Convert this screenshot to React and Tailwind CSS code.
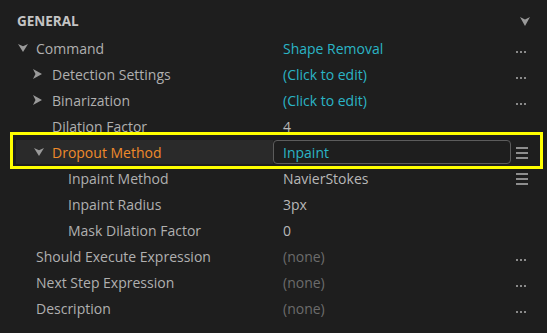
import React from "react";

const rows = [
  { label: "Command", depth: 0, arrow: "down", value: "Shape Removal", tone: "cyan", action: "dots" },
  { label: "Detection Settings", depth: 1, arrow: "right", value: "(Click to edit)", tone: "cyan", action: "dots" },
  { label: "Binarization", depth: 1, arrow: "right", value: "(Click to edit)", tone: "cyan", action: "dots" },
  { label: "Dilation Factor", depth: 1, value: "4", tone: "plain" },
  { label: "Dropout Method", depth: 1, arrow: "down", value: "Inpaint", tone: "cyan", action: "menu", selected: true },
  { label: "Inpaint Method", depth: 2, value: "NavierStokes", tone: "plain", action: "menu" },
  { label: "Inpaint Radius", depth: 2, value: "3px", tone: "plain" },
  { label: "Mask Dilation Factor", depth: 2, value: "0", tone: "plain" },
  { label: "Should Execute Expression", depth: 0, value: "(none)", tone: "none", action: "dots" },
  { label: "Next Step Expression", depth: 0, value: "(none)", tone: "none", action: "dots" },
  { label: "Description", depth: 0, value: "(none)", tone: "none", action: "dots" },
];

const toneClass = {
  cyan: "text-[#2bb5c6]",
  plain: "text-[#b8b8b8]",
  none: "text-[#6c6c6c]",
};

function Arrow({ dir, color = "#9a9a9a" }) {
  if (dir === "right") {
    return (
      <svg width="9" height="10" viewBox="0 0 9 10" className="ml-[1px]">
        <path d="M0 0 L9 5 L0 10 L2.5 5 Z" fill={color} />
      </svg>
    );
  }
  return (
    <svg width="10" height="8" viewBox="0 0 10 8" className="ml-[2px]">
      <path d="M0 0 L5 2.2 L10 0 L5 8 Z" fill={color} />
    </svg>
  );
}

function Dots() {
  return (
    <div className="flex gap-[2px] mt-[8px]">
      <span className="w-[2px] h-[2px] bg-[#8a8a8a]" />
      <span className="w-[2px] h-[2px] bg-[#8a8a8a]" />
      <span className="w-[2px] h-[2px] bg-[#8a8a8a]" />
    </div>
  );
}

function Menu() {
  return (
    <div className="flex flex-col gap-[3px] w-[12px] mt-[1px]">
      <span className="h-[2px] bg-[#8e8e8e]" />
      <span className="h-[2px] bg-[#8e8e8e]" />
      <span className="h-[2px] bg-[#8e8e8e]" />
    </div>
  );
}

function Row({ row }) {
  const pad = ["pl-[0px]", "pl-[16px]", "pl-[32px]"][row.depth];
  return (
    <div className="flex h-[26px] items-center">
      <div
        className={`flex items-center w-[257px] ${pad} ${
          row.selected ? "bg-[#2a2a2a] self-stretch my-[1px]" : ""
        }`}
      >
        <div className="w-[20px] flex items-center">
          {row.arrow && <Arrow dir={row.arrow} />}
        </div>
        <span className={row.selected ? "text-[#ef8a2a]" : "text-[#b0b0b0]"}>
          {row.label}
        </span>
      </div>
      {row.selected ? (
        <div className="w-[238px] h-[24px] border border-[#5c5c5c] rounded-[4px] flex items-center pl-[9px]">
          <span className={toneClass[row.tone]}>{row.value}</span>
        </div>
      ) : (
        <div className="w-[238px] pl-[10px]">
          <span className={toneClass[row.tone]}>{row.value}</span>
        </div>
      )}
      <div className="pl-[5px] w-[24px] flex items-center">
        {row.action === "dots" && <Dots />}
        {row.action === "menu" && <Menu />}
      </div>
    </div>
  );
}

export default function App() {
  return (
    <div
      className="relative w-[547px] h-[333px] bg-[#1e1e1e] text-[14px] overflow-hidden"
      style={{ fontFamily: '"Open Sans", "Liberation Sans", sans-serif' }}
    >
      <div className="flex items-center justify-between h-[35px] pl-[17px] pr-[17px] pt-[8px]">
        <span className="font-bold text-[#c4c4c4] text-[13.5px]">GENERAL</span>
        <svg width="10" height="9" viewBox="0 0 10 9">
          <path d="M0 0 L5 2.5 L10 0 L5 9 Z" fill="#9a9a9a" />
        </svg>
      </div>
      <div className="pl-[16px]">
        {rows.map((r) => (
          <Row key={r.label} row={r} />
        ))}
      </div>
      {/* highlight annotation */}
      <div className="absolute left-[10px] top-[132px] w-[533px] h-[37px] border-[3px] border-[#ffff00]" />
    </div>
  );
}
